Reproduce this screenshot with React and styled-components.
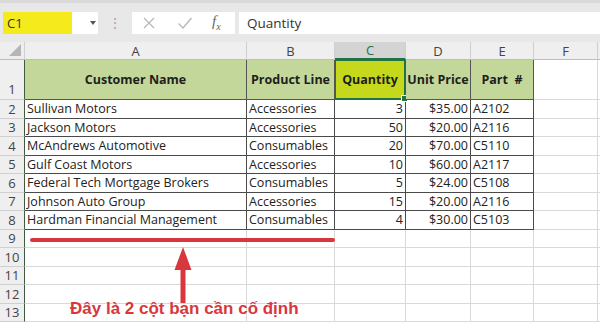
import styled, { createGlobalStyle } from "styled-components"

const GlobalStyle = createGlobalStyle`
    html, body {
        margin: 0;
        padding: 0;
        background: #ffffff;
        font-family: "Open Sans", "Liberation Sans", sans-serif;
    }
`

const columns = ["A", "B", "C", "D", "E", "F"]

const rows = [
    ["Sullivan Motors", "Accessories", "3", "$35.00", "A2102"],
    ["Jackson Motors", "Accessories", "50", "$20.00", "A2116"],
    ["McAndrews Automotive", "Consumables", "20", "$70.00", "C5110"],
    ["Gulf Coast Motors", "Accessories", "10", "$60.00", "A2117"],
    ["Federal Tech Mortgage Brokers", "Consumables", "5", "$24.00", "C5108"],
    ["Johnson Auto Group", "Accessories", "15", "$20.00", "A2116"],
    ["Hardman Financial Management", "Consumables", "4", "$30.00", "C5103"],
]

const headers = ["Customer Name", "Product Line", "Quantity", "Unit Price", "Part  #"]

const App = () => {
    return (
        <Page>
            <GlobalStyle />
            <FormulaBar>
                <NameBox>
                    <NameValue>C1</NameValue>
                    <Caret>
                        <svg width="6" height="4" viewBox="0 0 6 4"><path d="M0 0h6L3 4z" fill="#555" /></svg>
                    </Caret>
                </NameBox>
                <Grip>⋮</Grip>
                <FxBox>
                    <FxIcon>
                        <svg width="14" height="14" viewBox="0 0 14 14"><path d="M2 2l10 10M12 2L2 12" stroke="#b9b9b9" strokeWidth="1.3" /></svg>
                    </FxIcon>
                    <FxIcon>
                        <svg width="16" height="14" viewBox="0 0 16 14"><path d="M1.5 7.5l4.5 4.5L14.5 2" stroke="#b9b9b9" strokeWidth="1.4" fill="none" /></svg>
                    </FxIcon>
                    <FxLabel>f<sub>x</sub></FxLabel>
                </FxBox>
                <FormulaInput>Quantity</FormulaInput>
            </FormulaBar>

            <Sheet>
                <Corner>
                    <svg width="12" height="12" viewBox="0 0 12 12"><path d="M12 0v12H0z" fill="#b5b5b5" /></svg>
                </Corner>
                {columns.map((c) => (
                    <ColHead key={c} $active={c === "C"}>{c}</ColHead>
                ))}
                <ColHead $filler />

                <RowHead $tall>1</RowHead>
                {headers.map((h, i) => (
                    <HeadCell key={h} $selected={i === 2}>
                        {h}
                        {i === 2 && <Handle />}
                    </HeadCell>
                ))}
                <Cell />
                <Cell />

                {rows.map((r, i) => (
                    <Row key={i} n={i + 2} data={r} />
                ))}

                {[9, 10, 11, 12, 13].map((n) => (
                    <Row key={n} n={n} />
                ))}
            </Sheet>

            <Note>
                <RedLine />
                <svg width="22" height="58" viewBox="0 0 22 58" style={{ position: "absolute", left: 172, top: 246 }}>
                    <path d="M11 1L19.5 24H13.5V57H8.5V24H2.5z" fill="#d8373d" />
                </svg>
                <NoteText>Đây là 2 cột bạn cần cố định</NoteText>
            </Note>
        </Page>
    )
}
export default App

const Row = ({ n, data }) => (
    <>
        <RowHead>{n}</RowHead>
        {data ? (
            <>
                <Cell $data>{data[0]}</Cell>
                <Cell $data>{data[1]}</Cell>
                <Cell $data $right>{data[2]}</Cell>
                <Cell $data $right>{data[3]}</Cell>
                <Cell $data>{data[4]}</Cell>
            </>
        ) : (
            <>
                <Cell />
                <Cell />
                <Cell />
                <Cell />
                <Cell />
            </>
        )}
        <Cell />
        <Cell />
    </>
)

const Page = styled.div`
    position: relative;
    width: 600px;
    height: 325px;
    overflow: hidden;
    background: #ffffff;
`
const FormulaBar = styled.div`
    display: flex;
    align-items: center;
    height: 42px;
    padding: 0 0 0 3px;
    box-sizing: border-box;
    background: #e8e8e8;
    border-top: 3px solid #d9d9d9;
    font-family: "Open Sans", "Liberation Sans", sans-serif;
`
const NameBox = styled.div`
    display: flex;
    align-items: center;
    width: 95px;
    height: 22px;
    background: #ffffff;
`
const NameValue = styled.div`
    width: 69px;
    height: 100%;
    display: flex;
    align-items: center;
    padding-left: 4px;
    box-sizing: border-box;
    background: #f5ea1c;
    font-size: 13px;
    color: #333;
`
const Caret = styled.div`
    flex: 1;
    display: flex;
    justify-content: center;
    padding-left: 16px;
`
const Grip = styled.div`
    width: 34px;
    text-align: center;
    color: #a8a8a8;
    font-size: 14px;
`
const FxBox = styled.div`
    display: flex;
    align-items: center;
    width: 103px;
    height: 22px;
    background: #ffffff;
    padding-left: 10px;
    box-sizing: border-box;
`
const FxIcon = styled.div`
    width: 35px;
    display: flex;
    align-items: center;
`
const FxLabel = styled.div`
    font-family: "Liberation Serif", serif;
    font-style: italic;
    font-size: 15px;
    color: #666;
    sub {
        font-size: 10px;
    }
`
const FormulaInput = styled.div`
    flex: 1;
    height: 22px;
    margin-left: 4px;
    display: flex;
    align-items: center;
    padding-left: 8px;
    background: #ffffff;
    font-size: 13.5px;
    color: #333;
`
const Sheet = styled.div`
    display: grid;
    grid-template-columns: 25px 222px 88px 71px 65px 63px 64px 1fr;
    grid-template-rows: 18px 40px repeat(12, 18.5px);
    font-family: "Open Sans", "Liberation Sans", sans-serif;
    font-size: 12.5px;
    color: #222;
`
const Corner = styled.div`
    display: flex;
    justify-content: flex-end;
    align-items: flex-end;
    padding: 0 3px 3px 0;
    background: #eeeeee;
    border-right: 1px solid #cfcfcf;
    border-bottom: 1px solid #bdbdbd;
`
const ColHead = styled.div`
    display: flex;
    align-items: center;
    justify-content: center;
    background: ${(p) => (p.$active ? "#d4d4d4" : "#efefef")};
    border-right: ${(p) => (p.$filler ? "none" : "1px solid #cfcfcf")};
    border-bottom: ${(p) => (p.$active ? "2px solid #217346" : "1px solid #bdbdbd")};
    color: ${(p) => (p.$active ? "#217346" : "#444")};
    font-size: 13px;
`
const RowHead = styled.div`
    display: flex;
    align-items: ${(p) => (p.$tall ? "flex-end" : "center")};
    justify-content: center;
    padding-bottom: ${(p) => (p.$tall ? "1px" : "0")};
    background: #efefef;
    border-right: 1px solid #3f5a3f;
    border-bottom: 1px solid #cfcfcf;
    color: #444;
    font-size: 13px;
`
const HeadCell = styled.div`
    position: relative;
    display: flex;
    align-items: center;
    justify-content: center;
    background: ${(p) => (p.$selected ? "#c5d81c" : "#c4d79b")};
    border-right: 1px solid #555;
    border-bottom: 1px solid #555;
    box-shadow: ${(p) => (p.$selected ? "inset 0 0 0 1px #217346" : "none")};
    font-weight: bold;
    font-size: 12.5px;
    color: #1e1e1e;
    white-space: pre;
`
const Handle = styled.span`
    position: absolute;
    right: -3px;
    bottom: -3px;
    width: 5px;
    height: 5px;
    background: #217346;
    border: 1px solid #ffffff;
`
const Cell = styled.div`
    display: flex;
    align-items: center;
    justify-content: ${(p) => (p.$right ? "flex-end" : "flex-start")};
    padding: 0 2px;
    border-right: 1px solid ${(p) => (p.$data ? "#4a4a4a" : "#d9d9d9")};
    border-bottom: 1px solid ${(p) => (p.$data ? "#4a4a4a" : "#d9d9d9")};
    white-space: nowrap;
    overflow: hidden;
`
const Note = styled.div`
    position: absolute;
    inset: 0;
    pointer-events: none;
`
const RedLine = styled.div`
    position: absolute;
    left: 30px;
    top: 238px;
    width: 305px;
    height: 4px;
    border-radius: 2px;
    background: #d8373d;
`
const NoteText = styled.div`
    position: absolute;
    left: 70px;
    top: 299px;
    font-family: "Liberation Sans", Arial, sans-serif;
    font-weight: bold;
    font-size: 17px;
    color: #d8373d;
    white-space: nowrap;
`
